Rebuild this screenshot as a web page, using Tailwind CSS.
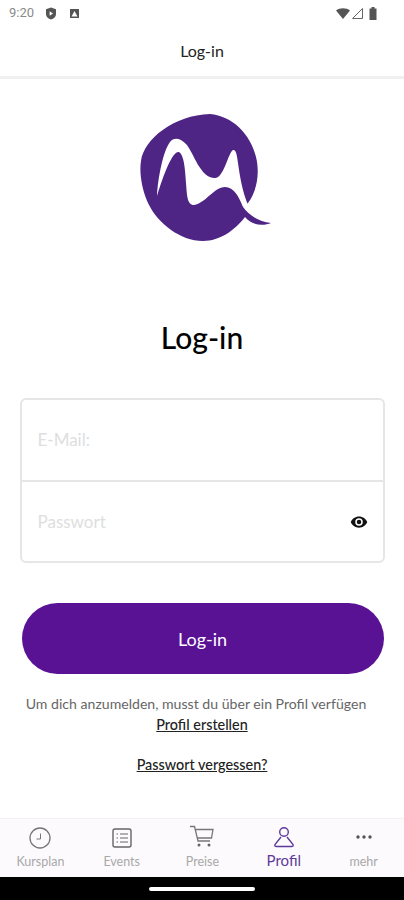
<!DOCTYPE html>
<html><head><meta charset="utf-8"><script src="https://cdn.jsdelivr.net/npm/@tailwindcss/browser@4"></script></head>
<body class="bg-white">
<div class="w-[404px] h-[900px] flex flex-col font-['Lato',sans-serif] overflow-hidden">
  <div class="h-[26px] flex items-center justify-between pl-[9px] pr-[27px] shrink-0">
    <div class="flex items-center">
      <span class="text-[13px] text-[#8a8a8a] font-['Roboto',sans-serif] w-[36px]">9:20</span>
      <svg width="12" height="13" viewBox="0 0 12 13"><path d="M6 .5 11 2.300V7c0 2.800-2.200 4.600-5 5.500C3.200 11.600 1 9.800 1 7V2.300Z" fill="#555"/><path d="M4.600 4.200 8 6.500 4.600 8.800Z" fill="#fff"/></svg>
      <svg class="ml-[12px]" width="11" height="11" viewBox="0 0 11 11"><rect x="1" y="1" width="9" height="9" fill="#555"/><path d="M2.500 8.500 5.500 3 8.500 8.500Z" fill="#fff"/></svg>
    </div>
    <div class="flex items-center">
      <svg width="14" height="11" viewBox="0 0 14 11"><path d="M0 2.500C3.500-.5 10.500-.5 14 2.500L7 11Z" fill="#555"/></svg>
      <svg class="ml-[1px]" width="12" height="11" viewBox="0 0 12 11"><path d="M11.500 .5V10.500H1.500Z" fill="none" stroke="#666" stroke-width="1"/></svg>
      <svg class="ml-[6px]" width="8" height="13" viewBox="0 0 8 13"><path d="M2.500 0H5.500V1.500H7.500V13H.5V1.500H2.500Z" fill="#555"/></svg>
    </div>
  </div>
  <div class="h-[53px] shrink-0 flex items-center justify-center border-b-[3px] border-[#f0f0f0] text-[16px] text-[#222]">Log-in</div>
  <main class="flex-1 flex flex-col items-center">
    <svg class="mt-[34px] ml-[8px] shrink-0" width="132" height="128" viewBox="0 0 132 128">
      <path d="M70 1C92 3 110 20 116 44C120 60 117 78 108 90L103 94C108 101 118 109 131 110C124 113 112 113 105 104C95 117 80 128 63 128C40 128 18 110 9 92C2 78-1 60 1 48C4 26 34 2 70 1Z" fill="#4e2585"/>
      <path d="M17 83C18 65 23 38 30 29C34 24 40 25 46 31C54 40 60 65 75 65C84 65 88 40 93 37C96 36 97 42 98 50C100 65 103 80 108 92L103 94C99 84 94 74 85 74C74 74 66 90 54 92C47 92 47 82 46 70C45 55 44 42 39 39C33 37 24 60 17 83Z" fill="#fff"/>
    </svg>
    <h1 class="mt-[78px] text-[30px] leading-[36px] font-medium text-black">Log-in</h1>
    <div class="mt-[43px] w-[365px] h-[165px] rounded-[6px] border-2 border-[#e6e6e6] flex flex-col">
      <div class="h-[82px] border-b-2 border-[#e6e6e6] flex items-center pl-[16px] text-[17px] text-[#dedede]">E-Mail:</div>
      <div class="flex-1 flex items-center justify-between pl-[16px] pr-[15px] text-[17px] text-[#dedede]">
        <span>Passwort</span>
        <svg width="18" height="18" viewBox="0 0 24 24"><path d="M12 4.500C7 4.500 2.700 7.600 1 12c1.700 4.400 6 7.500 11 7.500s9.300-3.100 11-7.500C21.300 7.600 17 4.500 12 4.500ZM12 17a5 5 0 1 1 0-10 5 5 0 0 1 0 10Zm0-8a3 3 0 1 0 0 6 3 3 0 0 0 0-6Z" fill="#111"/></svg>
      </div>
    </div>
    <button class="mt-[40px] w-[362px] h-[71px] ml-[1px] pt-[1px] rounded-full bg-[#5a1295] text-white text-[18px]">Log-in</button>
    <p class="mt-[20px] mr-[12px] text-[14.100px] leading-[20px] text-[#666]">Um dich anzumelden, musst du über ein Profil verfügen</p>
    <a class="mt-[1px] text-[14.400px] leading-[20px] font-medium text-[#222] underline">Profil erstellen</a>
    <a class="mt-[20px] text-[14.400px] leading-[20px] font-medium text-[#222] underline">Passwort vergessen?</a>
  </main>
  <nav class="h-[59px] shrink-0 bg-[#fdfafd] border-t border-[#f4f0f4] grid grid-cols-5 text-[12.500px] text-[#a8a8a8]">
    <div class="flex flex-col items-center pt-[7px]">
      <svg width="24" height="24" viewBox="0 0 24 24"><circle cx="12" cy="12" r="10" fill="none" stroke="#777" stroke-width="1.300"/><path d="M12.500 7.500V13H8.500" fill="none" stroke="#777"/></svg>
      <span class="mt-[3px] leading-[18px]">Kursplan</span>
    </div>
    <div class="flex flex-col items-center pt-[7px] pl-[1px]">
      <svg width="24" height="24" viewBox="0 0 24 24"><rect x="3" y="3" width="18" height="18" rx="2" fill="none" stroke="#666" stroke-width="1.400"/><path d="M6.500 8H8M10 8H18M6.500 12H8M10 12H18M6.500 16H8M10 16H18" stroke="#666" stroke-width="1.200"/></svg>
      <span class="mt-[3px] leading-[18px]">Events</span>
    </div>
    <div class="flex flex-col items-center pt-[6px] pl-[1px]">
      <svg width="24" height="24" viewBox="0 0 24 24"><path d="M0 1.500H4.500L8 16H20M5.500 4.500H23L21.500 13H7.500" fill="none" stroke="#777" stroke-width="1.300"/><circle cx="9" cy="20" r="1.500" fill="#666"/><circle cx="19" cy="20" r="1.500" fill="#666"/></svg>
      <span class="mt-[4px] leading-[18px]">Preise</span>
    </div>
    <div class="flex flex-col items-center pt-[7px] pl-[2px] text-[#5d3a9b]">
      <svg width="22" height="22" viewBox="0 0 22 22"><circle cx="11" cy="6" r="4.300" fill="none" stroke="#5d3a9b" stroke-width="1.400"/><path d="M8 11 2 18.500C1.500 20 2 20.500 3.500 20.500H18.500C20 20.500 20.500 20 20 18.500L14 11" fill="none" stroke="#5d3a9b" stroke-width="1.400"/></svg>
      <span class="mt-[3px] text-[15px] leading-[18px]">Profil</span>
    </div>
    <div class="flex flex-col items-center pt-[7px]">
      <svg width="24" height="24" viewBox="0 0 24 24"><circle cx="6" cy="11" r="1.700" fill="#555"/><circle cx="12" cy="11" r="1.700" fill="#555"/><circle cx="18" cy="11" r="1.700" fill="#555"/></svg>
      <span class="mt-[3px] leading-[18px]">mehr</span>
    </div>
  </nav>
  <div class="h-[23px] shrink-0 bg-black flex items-center justify-center"><div class="w-[106px] h-[4px] rounded-full bg-white"></div></div>
</div>
</body></html>
